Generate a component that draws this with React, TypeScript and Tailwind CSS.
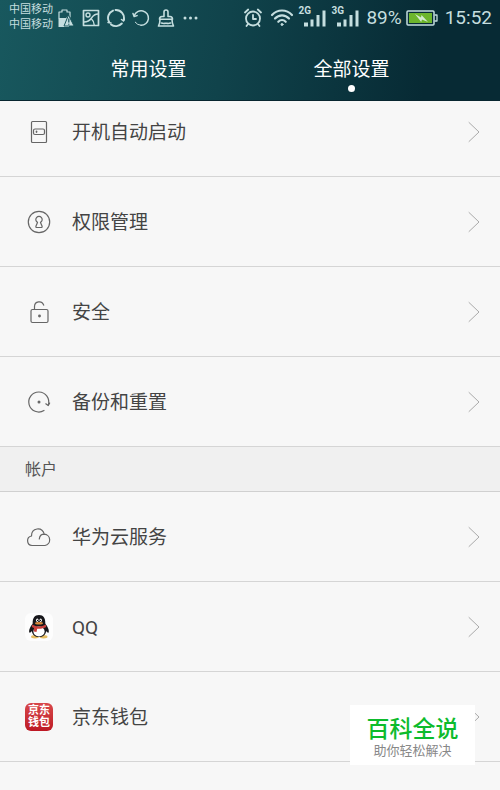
import type { ReactNode } from "react";

const line = {
  fill: "none",
  stroke: "currentColor",
  strokeLinecap: "round" as const,
  strokeLinejoin: "round" as const,
};

function Signal({ label }: { label: string }) {
  return (
    <span className="relative block h-6 w-7 shrink-0">
      <span className="absolute left-0 top-0 font-['Roboto'] text-[10px] font-bold leading-[10px]">{label}</span>
      <svg viewBox="0 0 28 24" className="h-6 w-7" fill="currentColor" aria-hidden="true">
        <path d="M6 16.500h4v4H6zM12.500 13.500h3v7h-3zM18.500 9h3v11.500h-3zM24.500 4.500h3v16h-3z" />
      </svg>
    </span>
  );
}

function StatusBar() {
  return (
    <div className="flex h-9 items-center justify-between pl-[9px] pr-2 text-[#c5dedf]">
      <div className="flex items-center">
        <div className="w-12 whitespace-nowrap pb-0.5 text-[11px] leading-[15px]">
          <div>中国移动</div>
          <div>中国移动</div>
        </div>
        <div className="flex items-center gap-[7px]">
          <svg viewBox="0 0 18 20" className="h-5 w-[18px]" aria-hidden="true">
            <path d="M2 10V4h3V2h5v2h3v5" {...line} strokeWidth="1.200" />
            <path d="M1.500 10H9l3-3v12H1.500z" fill="currentColor" />
            <path d="m11.500 7 5.500 11H7z" fill="currentColor" stroke="#17545b" />
            <path d="M11.800 10.500v4M11.800 15.800v1" stroke="#17545b" strokeWidth="1.200" />
          </svg>
          <svg viewBox="0 0 18 18" className="h-[18px] w-[18px]" {...line} strokeWidth="1.700" aria-hidden="true">
            <path d="M1.500 1.500h15v15h-15z" />
            <circle cx="6" cy="6" r="2" strokeWidth="1.400" />
            <path d="M2 13c3.500 0 5.500-1 7.500-4s3.500-4 6.500-4M9.500 10c1.800 1.500 2.500 3.500 2.700 6" strokeWidth="1.400" />
          </svg>
          <svg viewBox="0 0 18 20" className="h-5 w-[18px]" {...line} strokeWidth="1.900" aria-hidden="true">
            <path d="M2.100 14A8 8 0 0 1 6 2.600M8.500 2a8 8 0 0 1 8.200 10M14.800 15.500A8 8 0 0 1 4 16.500" />
            <path d="m1 14.500 3 .5M14.500 11.500l2 1.500 1-2" strokeWidth="1.500" />
          </svg>
          <svg viewBox="0 0 18 18" className="h-[18px] w-[18px]" {...line} strokeWidth="1.500" aria-hidden="true">
            <path d="M2.300 6.500A7.300 7.300 0 1 1 9 16.300" />
            <path d="m1 4.500 1.100 3 3-.9" />
            <path d="M3.200 13.200A7.300 7.300 0 0 0 9 16.300" strokeWidth="1" />
          </svg>
          <svg viewBox="0 0 18 20" className="h-5 w-[18px]" {...line} strokeWidth="1.600" aria-hidden="true">
            <path d="M7 8.500V4a2 2 0 0 1 4 0v4.500h2c1.500 0 2.500 1 2.500 2.700h-13c0-1.700 1-2.700 2.500-2.700zM3 11.500c0 3-.5 4.500-1.500 6.500h15c-1-2-1.500-3.500-1.500-6.500M4.500 15c2 .8 3 .3 4.500.3s2.500.5 4.500-.3" />
          </svg>
          <svg viewBox="0 0 18 18" className="h-[18px] w-[18px]" fill="currentColor" aria-hidden="true">
            <circle cx="3" cy="9" r="1.500" />
            <circle cx="8.500" cy="9" r="1.500" />
            <circle cx="14" cy="9" r="1.500" />
          </svg>
        </div>
      </div>
      <div className="flex items-center">
        <svg viewBox="0 0 20 20" className="mr-[7px] h-5 w-5" {...line} strokeWidth="1.800" aria-hidden="true">
          <circle cx="10" cy="10.500" r="7" />
          <path d="M10 7v4h3M2 4.500l3.200-3M18 4.500l-3.200-3M5 16l-1.500 2M15 16l1.500 2" />
        </svg>
        <svg viewBox="0 0 24 20" className="mr-1 h-5 w-6" {...line} strokeWidth="2.200" aria-hidden="true">
          <path d="M2 7C7.500 1 16.500 1 22 7M5 10.500c4-4.300 10-4.300 14 0M8.300 13.800c2.200-2.200 5.200-2.200 7.400 0" />
          <circle cx="12" cy="16.500" r="1" fill="currentColor" strokeWidth="1" />
        </svg>
        <div className="flex gap-[5px]">
          <Signal label="2G" />
          <Signal label="3G" />
        </div>
        <span className="ml-[7px] font-['Roboto'] text-[19px] leading-6">89%</span>
        <svg viewBox="0 0 32 18" className="ml-1 h-[18px] w-8" aria-hidden="true">
          <rect x="1" y="2" width="27" height="14" rx="1" {...line} strokeWidth="1.500" />
          <path d="M29 6h2v6h-2" {...line} strokeWidth="1.300" />
          <rect x="3" y="4" width="23" height="10" fill="#6cb52c" />
          <path d="m9 5 6 3.500.5-2.500 6.500 7-6-2.500-.8 2.500z" fill="#d3ead0" />
        </svg>
        <time className="ml-[7px] font-['Roboto'] text-[19px] leading-6">15:52</time>
      </div>
    </div>
  );
}

function AutoStartIcon() {
  return (
    <svg viewBox="0 0 28 28" className="h-7 w-7" {...line} strokeWidth="1.200" aria-hidden="true">
      <rect x="6.500" y="3.500" width="15" height="21" rx="1" />
      <rect x="8.500" y="11" width="11" height="5.500" rx="1.500" />
      <path d="M11.500 13.200v1" strokeWidth="1.500" />
    </svg>
  );
}

function KeyholeIcon() {
  return (
    <svg viewBox="0 0 28 28" className="h-7 w-7" {...line} strokeWidth="1.200" aria-hidden="true">
      <circle cx="14" cy="14" r="10.700" />
      <path d="M12.500 14.400a3.200 3.200 0 1 1 3 0l1.500 3.600c.4 1.200 0 1.500-.8 1.500h-4.400c-.8 0-1.200-.3-.8-1.500z" />
    </svg>
  );
}

function UnlockIcon() {
  return (
    <svg viewBox="0 0 28 28" className="h-7 w-7" {...line} strokeWidth="1.200" aria-hidden="true">
      <rect x="6" y="11.500" width="17" height="13" rx="1.500" />
      <path d="M9.500 11.500V8.500a4.700 4.700 0 0 1 9.200-1.300" />
      <circle cx="14.500" cy="18" r=".8" fill="currentColor" />
    </svg>
  );
}

function RestoreIcon() {
  return (
    <svg viewBox="0 0 28 28" className="h-7 w-7" {...line} strokeWidth="1.200" aria-hidden="true">
      <path d="M19 22.500A10 10 0 1 1 23.300 17" />
      <path d="m20.800 15.800 2.400 1.700 1.400-2.400" />
      <circle cx="14" cy="14" r=".9" fill="currentColor" />
    </svg>
  );
}

function CloudIcon() {
  return (
    <svg viewBox="0 0 28 28" className="h-7 w-7" {...line} strokeWidth="1.200" aria-hidden="true">
      <path d="M7 22.500a4.800 4.800 0 0 1-.5-9.500C6.500 4.500 17 3.500 19.300 11.200a5.700 5.700 0 0 1 .7 11.300zM19.300 11.200c-2.800 0-4.700 1.800-5 4.800" />
    </svg>
  );
}

function QQIcon() {
  return (
    <svg viewBox="0 0 28 28" className="h-7 w-7" aria-hidden="true">
      <rect width="28" height="28" rx="6" fill="#fdfdfd" />
      <ellipse cx="10" cy="23.800" rx="4" ry="1.700" fill="#e5bd62" />
      <ellipse cx="18.500" cy="23.800" rx="4" ry="1.700" fill="#e5bd62" />
      <path d="M14 2C9.500 2 7.500 5 7.700 10.500 5.500 13.500 3.500 17 4.300 19.500c.7.500 1.700-.3 2.500-1.500C7.500 22 10 24 14 24s6.500-2 7.200-6c.8 1.200 1.800 2 2.500 1.500.8-2.500-1.200-6-3.400-9C20.500 5 18.500 2 14 2z" fill="#17171b" />
      <ellipse cx="14" cy="18.500" rx="5.600" ry="5" fill="#fff" />
      <ellipse cx="12.300" cy="7.200" rx="1.200" ry="1.700" fill="#fff" />
      <ellipse cx="15.700" cy="7.200" rx="1.200" ry="1.700" fill="#fff" />
      <circle cx="12.600" cy="7.400" r=".6" />
      <circle cx="15.400" cy="7.400" r=".6" />
      <ellipse cx="14" cy="10.300" rx="4" ry="1.200" fill="#d98a3c" />
      <path d="M7.300 11.500c4 2.500 9.400 2.500 13.400 0l.5 2.500c-2.700 1.500-6 2.100-9 1.700l-.7 3.300-2.700-.5.200-3.500-2.200-1z" fill="#c9403c" />
    </svg>
  );
}

function WalletIcon() {
  return (
    <span
      aria-hidden="true"
      className="flex h-7 w-7 flex-col items-center justify-center rounded-md bg-linear-to-b from-[#d8474a] to-[#bd1724] text-[11px] font-bold leading-3 text-white"
    >
      <span>京东</span>
      <span>钱包</span>
    </span>
  );
}

function Row({ icon, label }: { icon: ReactNode; label: string }) {
  return (
    <li>
      <button
        type="button"
        className="flex h-[90px] w-full items-center border-b border-[#d5d5d5] pl-[25px] pr-5 text-left text-[#444]"
      >
        <span className="mr-[19px] shrink-0 text-[#666]">{icon}</span>
        <span className="flex-1 pt-0.5 text-[19px] leading-7">{label}</span>
        <svg viewBox="0 0 12 22" className="h-[22px] w-3 text-[#aaa]" {...line} aria-hidden="true">
          <path d="m1 1.500 10 9.500-10 9.500" />
        </svg>
      </button>
    </li>
  );
}

export default function App() {
  return (
    <div className="relative flex h-screen flex-col overflow-hidden bg-[#f7f7f7] font-['Roboto','Noto_Sans_CJK_SC',sans-serif]">
      <header className="z-10 h-[101px] shrink-0 border-b border-[#082630] bg-linear-[100deg] from-[#18585e] via-[#10434b] via-45% to-[#072a34] to-85%">
        <StatusBar />
        <nav className="flex px-[47px] pt-5 text-[19px] leading-7 text-white">
          <button type="button" className="flex flex-1 flex-col items-center">
            常用设置
          </button>
          <button type="button" aria-current="page" className="flex flex-1 flex-col items-center">
            全部设置
            <span className="mt-px h-[7px] w-[7px] rounded-full bg-white" />
          </button>
        </nav>
      </header>

      <main className="min-h-0 flex-1 overflow-hidden">
        <ul className="-mt-3.5">
          <Row icon={<AutoStartIcon />} label="开机自动启动" />
          <Row icon={<KeyholeIcon />} label="权限管理" />
          <Row icon={<UnlockIcon />} label="安全" />
          <Row icon={<RestoreIcon />} label="备份和重置" />
        </ul>
        <h2 className="flex h-[45px] items-center border-b border-[#d0d0d0] bg-[#f0f0f0] pl-[25px] pt-0.5 text-base text-[#555]">
          帐户
        </h2>
        <ul>
          <Row icon={<CloudIcon />} label="华为云服务" />
          <Row icon={<QQIcon />} label="QQ" />
          <Row icon={<WalletIcon />} label="京东钱包" />
        </ul>
      </main>

      <aside className="absolute bottom-[25px] right-[25px] flex h-[60px] w-[125px] flex-col items-center bg-white pt-3">
        <strong className="text-[23px] font-medium leading-[26px] text-[#0dbb2c]">百科全说</strong>
        <span className="text-[13px] leading-4 text-[#888]">助你轻松解决</span>
      </aside>
    </div>
  );
}
